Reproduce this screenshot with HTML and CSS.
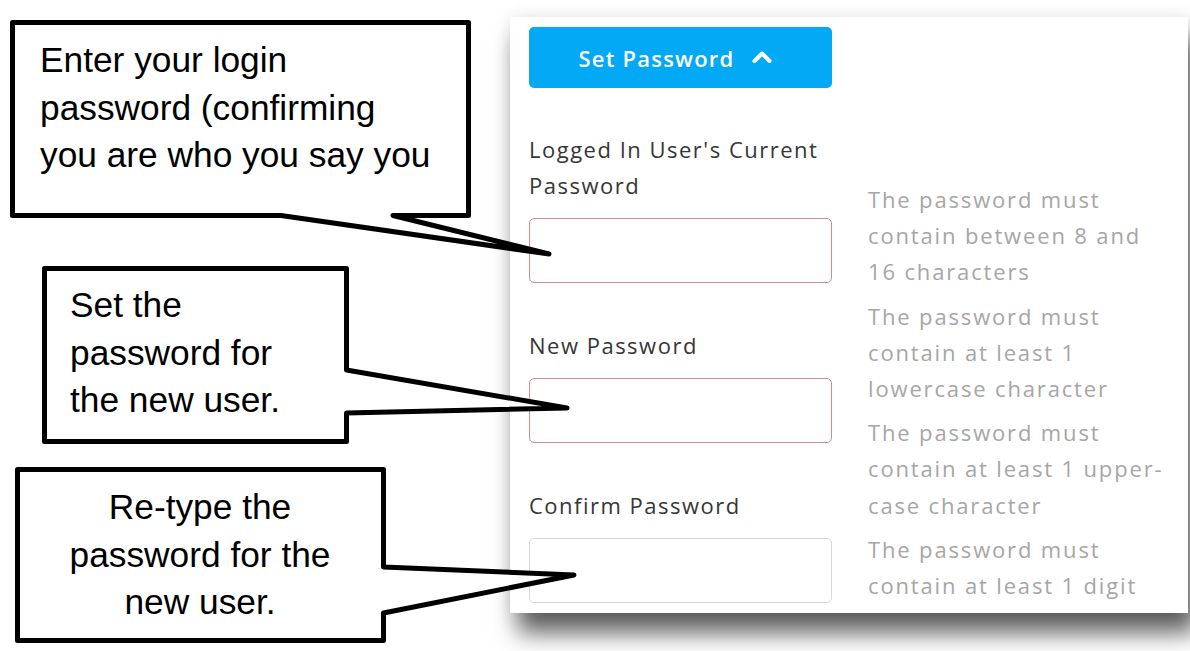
FILE: index.html
```html
<!DOCTYPE html>
<html lang="en">
<head>
<meta charset="utf-8">
<title>Set Password</title>
<link rel="stylesheet" href="styles.css">
</head>
<body>
<div class="stage">
  <main class="card">
    <div class="form-col">
      <button class="toggle" type="button">
        <span>Set Password</span>
        <svg class="chev" width="22" height="14" viewBox="0 0 22 14"><path d="M3.5 11 L11 3.5 L18.5 11" fill="none" stroke="#fff" stroke-width="4" stroke-linecap="round" stroke-linejoin="round"/></svg>
      </button>
      <div class="field">
        <label class="label">Logged In User's Current<br>Password</label>
        <div class="input invalid"></div>
      </div>
      <div class="field">
        <label class="label">New Password</label>
        <div class="input invalid"></div>
      </div>
      <div class="field">
        <label class="label">Confirm Password</label>
        <div class="input"></div>
      </div>
    </div>
    <div class="rules">
      <p class="rule">The password must<br>contain between 8 and<br>16 characters</p>
      <p class="rule">The password must<br>contain at least 1<br>lowercase character</p>
      <p class="rule">The password must<br>contain at least 1 upper-<br>case character</p>
      <p class="rule">The password must<br>contain at least 1 digit</p>
    </div>
  </main>

  <svg class="callouts" width="1190" height="651" viewBox="0 0 1190 651">
    <g fill="#fff" stroke="#000" stroke-width="5" stroke-linejoin="round">
      <path d="M12.5 22.5 H468.5 V215.5 H393 L549 254 L281 215.5 H12.5 Z"/>
      <path d="M44.5 268.5 H346.5 V370 L567 408 L346.5 413 V441.5 H44.5 Z"/>
      <path d="M17.5 469.5 H383.5 V567 L574 575 L383.5 613 V640.5 H17.5 Z"/>
    </g>
  </svg>
  <p class="note note-1">Enter your login<br>password (confirming<br>you are who you say you</p>
  <p class="note note-2">Set the<br>password for<br>the new user.</p>
  <p class="note note-3">Re-type the<br>password for the<br>new user.</p>
</div>
</body>
</html>
```
FILE: styles.css
```css
* { box-sizing: border-box; }

html, body {
  margin: 0;
  padding: 0;
  background: #ffffff;
}

body {
  width: 1190px;
  height: 651px;
  overflow: hidden;
  font-family: "Open Sans", "Noto Sans", sans-serif;
}

.stage {
  position: relative;
  width: 1190px;
  height: 651px;
  padding: 17px 0 0 510px;
}

.card {
  width: 678px;
  height: 596px;
  background: #ffffff;
  padding: 10px 0 0 19px;
  display: grid;
  grid-template-columns: 303px 1fr;
  column-gap: 36px;
  align-items: start;
  box-shadow: 8px 20px 22px rgba(0, 0, 0, 0.62), 0 0 16px rgba(0, 0, 0, 0.09);
}

.form-col {
  display: flex;
  flex-direction: column;
}

.toggle {
  height: 61px;
  width: 303px;
  border: none;
  border-radius: 5px;
  background: #03a9f4;
  color: #ffffff;
  font-family: "Open Sans", "Noto Sans", sans-serif;
  font-size: 22px;
  font-weight: 600;
  letter-spacing: 1.2px;
  display: flex;
  align-items: center;
  justify-content: center;
  gap: 17px;
  padding: 0 9px 0 0;
}

.chev { display: block; margin-top: -1px; }

.field {
  display: flex;
  flex-direction: column;
  gap: 15px;
  margin-top: 44px;
}

.field:first-of-type { margin-top: 43px; }

.label {
  font-size: 22px;
  line-height: 36px;
  letter-spacing: 1.5px;
  color: #363636;
}

.input {
  height: 65px;
  border: 1.5px solid #d8d8d8;
  border-radius: 5px;
  background: #ffffff;
}

.input.invalid { border-color: #d98892; }

.rules {
  padding-top: 154px;
  display: flex;
  flex-direction: column;
  gap: 8px;
}

.rule {
  margin: 0;
  font-size: 22px;
  line-height: 36.2px;
  letter-spacing: 1.85px;
  color: #a6a6a6;
  white-space: nowrap;
}

/* Annotation callouts drawn over the screenshot */
.callouts {
  position: absolute;
  left: 0;
  top: 0;
  pointer-events: none;
}

.note {
  position: absolute;
  margin: 0;
  font-family: "Liberation Sans", Arial, sans-serif;
  font-size: 35.3px;
  line-height: 47.5px;
  color: #000000;
  white-space: nowrap;
}

.note-1 { left: 40px; top: 36px; }
.note-2 { left: 70px; top: 281px; }
.note-3 { left: 17px; width: 366px; top: 483px; text-align: center; }
```
